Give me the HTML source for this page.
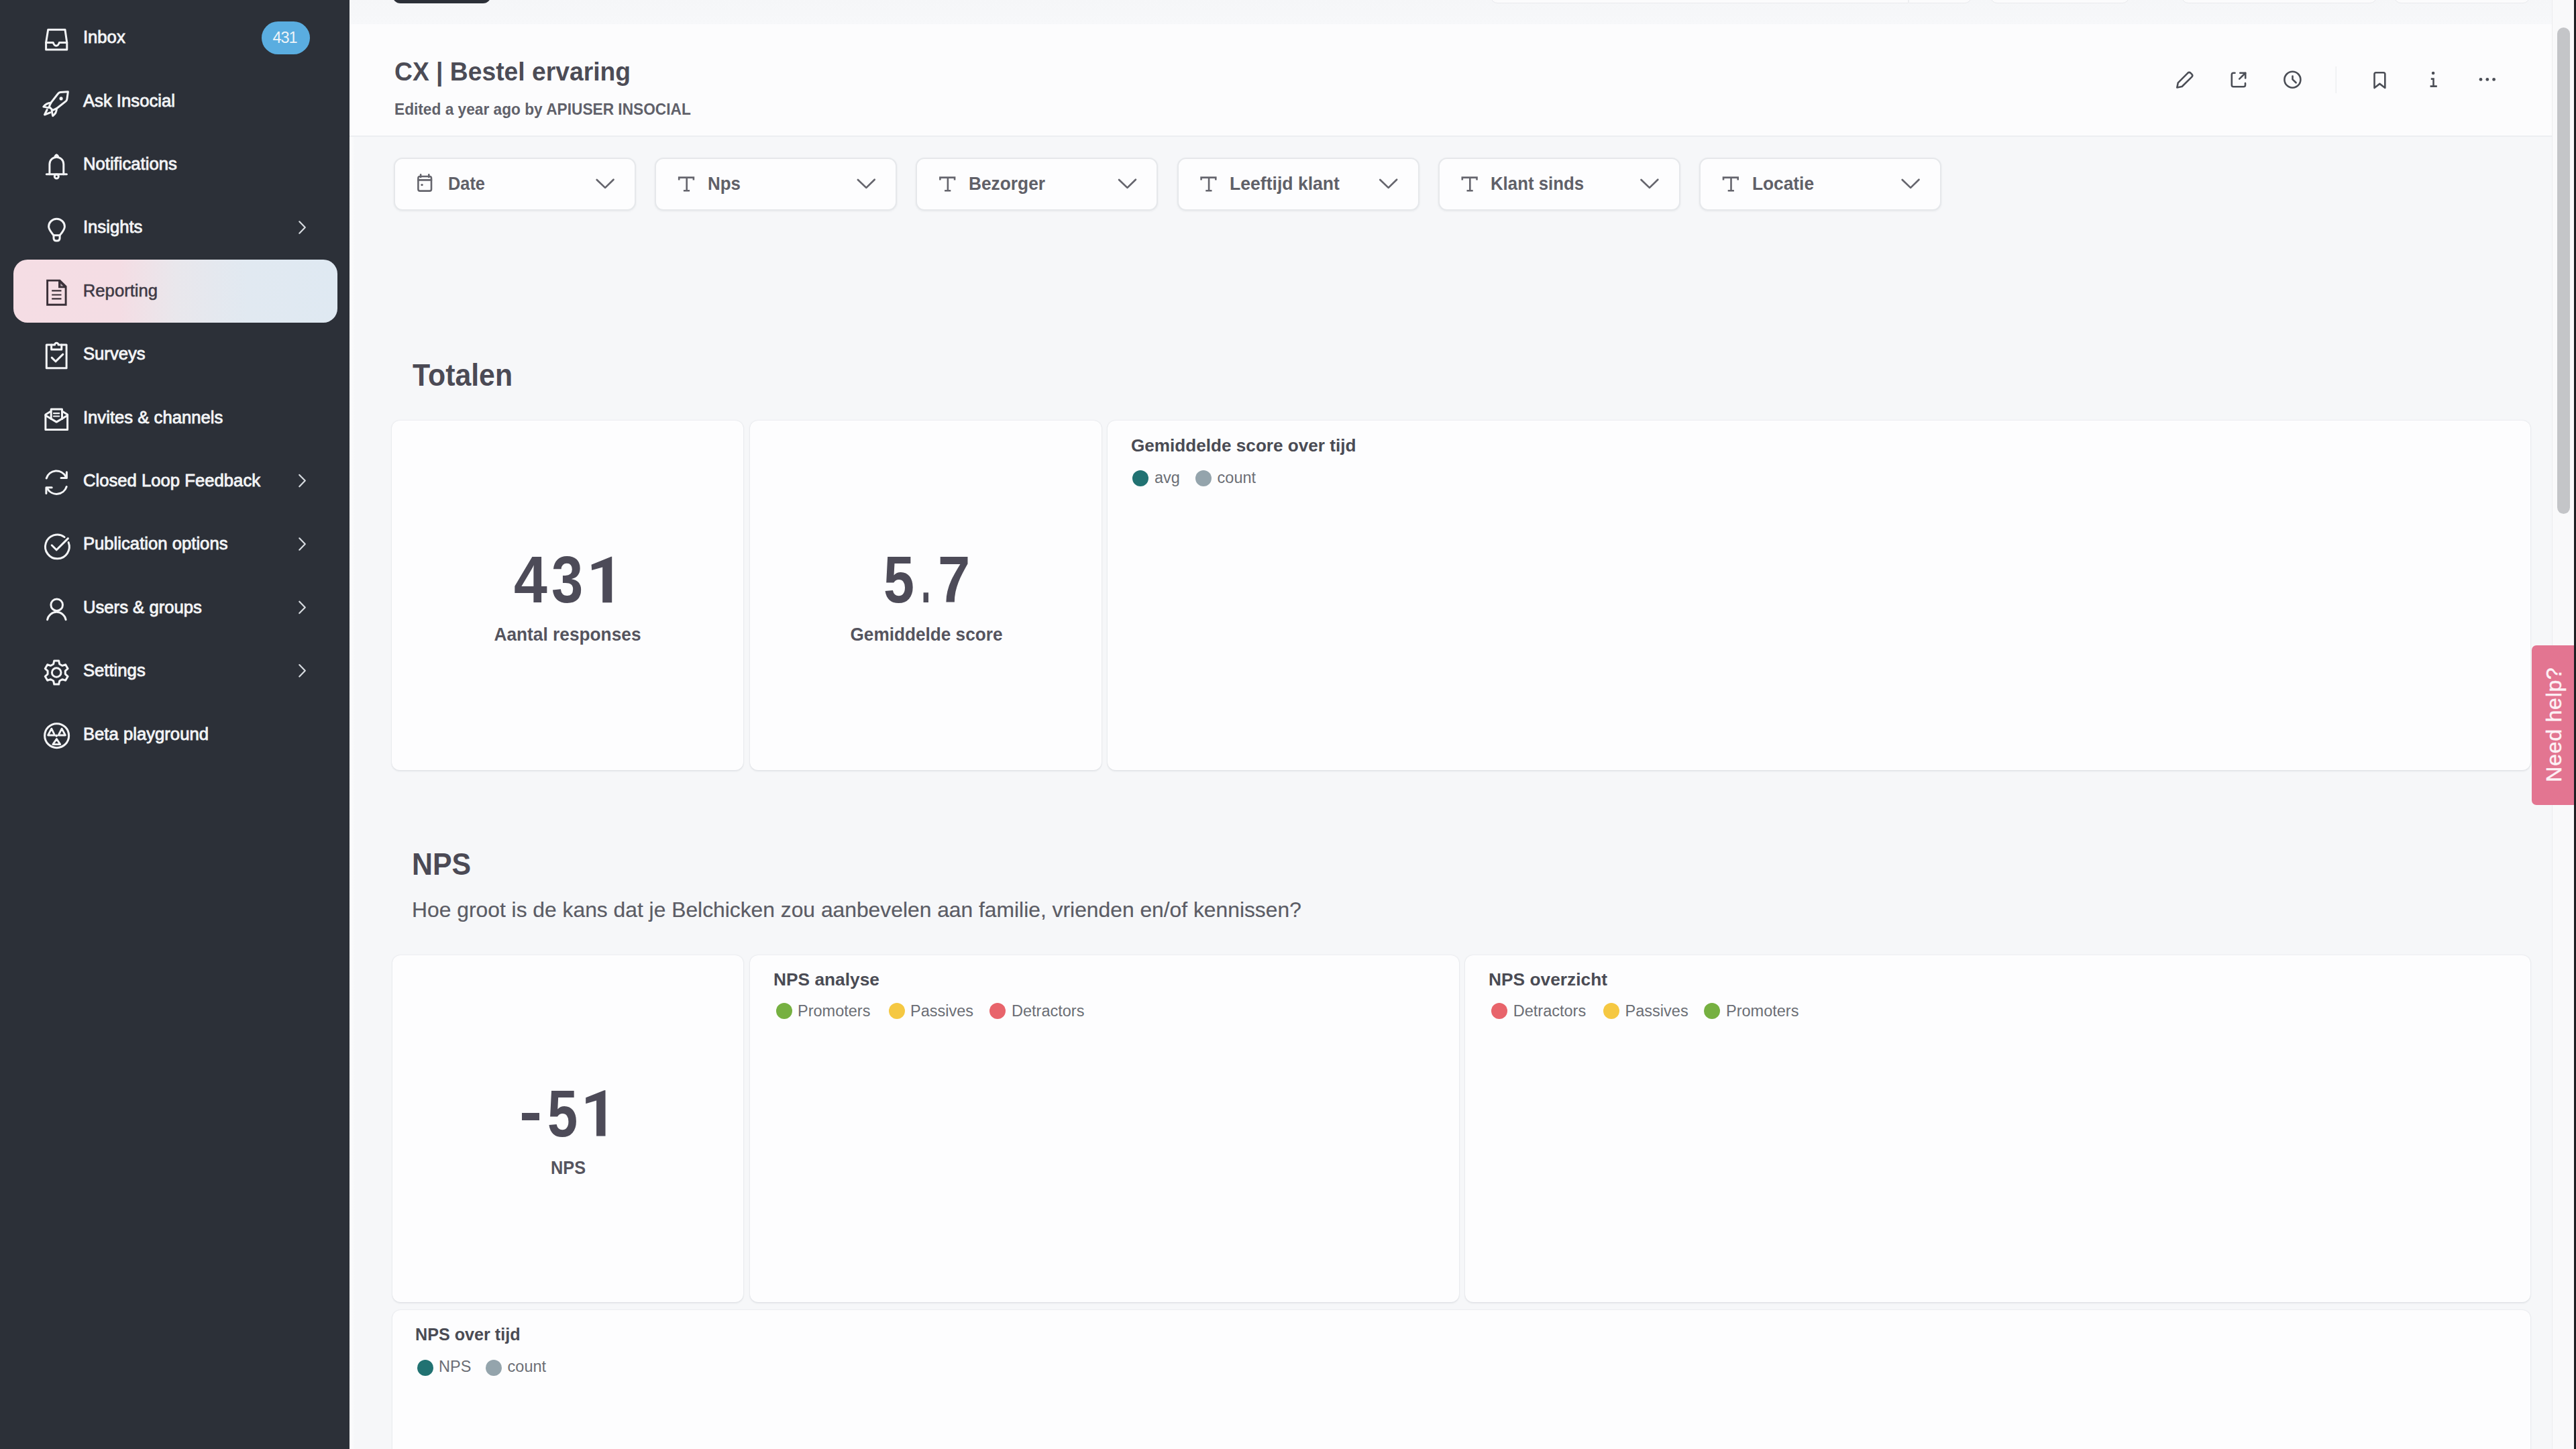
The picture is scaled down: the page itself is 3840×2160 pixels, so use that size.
<!DOCTYPE html>
<html><head><meta charset="utf-8">
<style>
*{box-sizing:border-box;margin:0;padding:0}
html,body{width:3840px;height:2160px;overflow:hidden;font-family:"Liberation Sans",sans-serif;background:#f7f8fa;position:relative}
.t{position:absolute;white-space:nowrap}
.r{position:absolute}
svg{position:absolute;left:0;top:0}
</style></head>
<body>
<div class="r" style="left:0px;top:0px;width:521px;height:2160px;background:#2c3038"></div>
<div class="r" style="left:20px;top:387px;width:483px;height:94px;border-radius:21px;background:linear-gradient(90deg,#f5dde4 0%,#f4dde4 33%,#e9e7ec 50%,#e1e9f1 72%,#dfe9f2 100%)"></div>
<div class="r" style="left:390px;top:32px;width:72px;height:49px;border-radius:25px;background:#5aade0"></div>
<div class="t" style="left:-575.50px;width:2000px;text-align:center;top:44.53px;font-size:23.5px;line-height:23.5px;color:#eef4f8;letter-spacing:-1.000px;">431</div>
<div class="t" style="left:123.92px;top:43.16px;font-size:25.7px;line-height:25.7px;color:#f3f4f6;-webkit-text-stroke:0.85px #f3f4f6;">Inbox</div>
<div class="t" style="left:123.92px;top:137.56px;font-size:25.7px;line-height:25.7px;color:#f3f4f6;-webkit-text-stroke:0.85px #f3f4f6;">Ask Insocial</div>
<div class="t" style="left:123.92px;top:231.96px;font-size:25.7px;line-height:25.7px;color:#f3f4f6;-webkit-text-stroke:0.85px #f3f4f6;">Notifications</div>
<div class="t" style="left:123.92px;top:326.36px;font-size:25.7px;line-height:25.7px;color:#f3f4f6;-webkit-text-stroke:0.85px #f3f4f6;">Insights</div>
<div class="t" style="left:123.78px;top:420.75px;font-size:25.7px;line-height:25.7px;color:#3e3a45;-webkit-text-stroke:0.55px #3e3a45;">Reporting</div>
<div class="t" style="left:123.92px;top:515.15px;font-size:25.7px;line-height:25.7px;color:#f3f4f6;-webkit-text-stroke:0.85px #f3f4f6;">Surveys</div>
<div class="t" style="left:123.92px;top:609.56px;font-size:25.7px;line-height:25.7px;color:#f3f4f6;-webkit-text-stroke:0.85px #f3f4f6;">Invites &amp; channels</div>
<div class="t" style="left:123.92px;top:703.96px;font-size:25.7px;line-height:25.7px;color:#f3f4f6;-webkit-text-stroke:0.85px #f3f4f6;">Closed Loop Feedback</div>
<div class="t" style="left:123.92px;top:798.36px;font-size:25.7px;line-height:25.7px;color:#f3f4f6;-webkit-text-stroke:0.85px #f3f4f6;">Publication options</div>
<div class="t" style="left:123.92px;top:892.75px;font-size:25.7px;line-height:25.7px;color:#f3f4f6;-webkit-text-stroke:0.85px #f3f4f6;">Users &amp; groups</div>
<div class="t" style="left:123.92px;top:987.15px;font-size:25.7px;line-height:25.7px;color:#f3f4f6;-webkit-text-stroke:0.85px #f3f4f6;">Settings</div>
<div class="t" style="left:123.92px;top:1081.56px;font-size:25.7px;line-height:25.7px;color:#f3f4f6;-webkit-text-stroke:0.85px #f3f4f6;">Beta playground</div>
<div class="r" style="left:521px;top:0px;width:3283px;height:2160px;background:#f6f7f9"></div>
<div class="r" style="left:521px;top:37px;width:8px;height:2123px;background:linear-gradient(90deg,#fdfdfd,#f6f7f9)"></div>
<div class="r" style="left:521px;top:0px;width:3283px;height:37px;background:linear-gradient(#f5f6f8,#f7f8fa)"></div>
<div class="r" style="left:2221.7px;top:-30px;width:717.3px;height:35px;background:#fbfbfc;border:1.5px solid #e9eaed;border-radius:10px;box-sizing:border-box"></div>
<div class="r" style="left:2967px;top:-30px;width:207px;height:35px;background:#fbfbfc;border:1.5px solid #e9eaed;border-radius:10px;box-sizing:border-box"></div>
<div class="r" style="left:3252px;top:-30px;width:291px;height:35px;background:#fbfbfc;border:1.5px solid #e9eaed;border-radius:10px;box-sizing:border-box"></div>
<div class="r" style="left:3569px;top:-30px;width:202px;height:35px;background:#fbfbfc;border:1.5px solid #e9eaed;border-radius:10px;box-sizing:border-box"></div>
<div class="r" style="left:2844px;top:-10px;width:1.5px;height:15px;background:#eeeff1"></div>
<div class="r" style="left:585px;top:-30px;width:147px;height:35px;background:#2c3038;border-radius:12px"></div>
<div class="r" style="left:521px;top:36px;width:3283px;height:166px;background:#fcfcfd"></div>
<div class="r" style="left:521px;top:202px;width:3283px;height:2px;background:#eceef1"></div>
<div class="r" style="left:3804px;top:0px;width:33px;height:2160px;background:#f9f9fa;border-left:1px solid #ececee"></div>
<div class="r" style="left:3812px;top:41px;width:19px;height:725px;background:#c4c5c8;border-radius:10px"></div>
<div class="r" style="left:3837px;top:0px;width:3px;height:2160px;background:#1e1f22"></div>
<div class="t" style="left:588.0px;top:87.12px;font-size:39.5px;line-height:39.5px;color:#4c4c56;font-weight:bold;transform:scaleX(0.9430);transform-origin:0 50%;">CX | Bestel ervaring</div>
<div class="t" style="left:588.0px;top:150.96px;font-size:24.4px;line-height:24.4px;color:#60616a;font-weight:bold;transform:scaleX(0.9304);transform-origin:0 50%;">Edited a year ago by APIUSER INSOCIAL</div>
<div class="r" style="left:587.0px;top:235px;width:361px;height:79px;background:#fdfdfe;border:2px solid #e6e8eb;border-radius:13px;box-sizing:border-box;box-shadow:0 1px 3px rgba(40,50,70,0.07)"></div>
<div class="t" style="left:667.7px;top:260.55px;font-size:27px;line-height:27px;color:#606068;font-weight:bold;transform:scaleX(0.9387);transform-origin:0 50%;">Date</div>
<div class="r" style="left:976.2px;top:235px;width:361px;height:79px;background:#fdfdfe;border:2px solid #e6e8eb;border-radius:13px;box-sizing:border-box;box-shadow:0 1px 3px rgba(40,50,70,0.07)"></div>
<div class="t" style="left:1054.7px;top:260.55px;font-size:27px;line-height:27px;color:#606068;font-weight:bold;transform:scaleX(0.9602);transform-origin:0 50%;">Nps</div>
<div class="r" style="left:1365.4px;top:235px;width:361px;height:79px;background:#fdfdfe;border:2px solid #e6e8eb;border-radius:13px;box-sizing:border-box;box-shadow:0 1px 3px rgba(40,50,70,0.07)"></div>
<div class="t" style="left:1443.9px;top:260.55px;font-size:27px;line-height:27px;color:#606068;font-weight:bold;transform:scaleX(0.9740);transform-origin:0 50%;">Bezorger</div>
<div class="r" style="left:1754.6px;top:235px;width:361px;height:79px;background:#fdfdfe;border:2px solid #e6e8eb;border-radius:13px;box-sizing:border-box;box-shadow:0 1px 3px rgba(40,50,70,0.07)"></div>
<div class="t" style="left:1833.1px;top:260.55px;font-size:27px;line-height:27px;color:#606068;font-weight:bold;transform:scaleX(0.9845);transform-origin:0 50%;">Leeftijd klant</div>
<div class="r" style="left:2143.8px;top:235px;width:361px;height:79px;background:#fdfdfe;border:2px solid #e6e8eb;border-radius:13px;box-sizing:border-box;box-shadow:0 1px 3px rgba(40,50,70,0.07)"></div>
<div class="t" style="left:2222.3px;top:260.55px;font-size:27px;line-height:27px;color:#606068;font-weight:bold;transform:scaleX(0.9551);transform-origin:0 50%;">Klant sinds</div>
<div class="r" style="left:2533.0px;top:235px;width:361px;height:79px;background:#fdfdfe;border:2px solid #e6e8eb;border-radius:13px;box-sizing:border-box;box-shadow:0 1px 3px rgba(40,50,70,0.07)"></div>
<div class="t" style="left:2611.5px;top:260.55px;font-size:27px;line-height:27px;color:#606068;font-weight:bold;transform:scaleX(0.9735);transform-origin:0 50%;">Locatie</div>
<div class="t" style="left:615.4px;top:535.05px;font-size:47px;line-height:47px;color:#4b4a55;font-weight:bold;transform:scaleX(0.9110);transform-origin:0 50%;">Totalen</div>
<div class="r" style="left:584px;top:627px;width:524px;height:521px;background:#fdfdfe;border-radius:12px;box-shadow:0 0 2.5px rgba(40,50,70,0.11),0 1.5px 2.5px rgba(40,50,70,0.07)"></div>
<div class="r" style="left:1118px;top:627px;width:524px;height:521px;background:#fdfdfe;border-radius:12px;box-shadow:0 0 2.5px rgba(40,50,70,0.11),0 1.5px 2.5px rgba(40,50,70,0.07)"></div>
<div class="r" style="left:1651px;top:627px;width:2121px;height:521px;background:#fdfdfe;border-radius:12px;box-shadow:0 0 2.5px rgba(40,50,70,0.11),0 1.5px 2.5px rgba(40,50,70,0.07)"></div>
<div class="t" style="left:766.20px;top:814.35px;font-size:99px;line-height:99px;color:#4d4b58;font-weight:bold;transform:scaleX(0.9045);transform-origin:0 50%">4</div>
<div class="t" style="left:822.10px;top:814.35px;font-size:99px;line-height:99px;color:#4d4b58;font-weight:bold;transform:scaleX(0.8572);transform-origin:0 50%">3</div>
<svg width="3840" height="2160" style="position:absolute;left:0;top:0"><path fill="#4d4b58" d="M911.1,829.8 L881.6,841.7 L882.2,850 L898.2,845.4 V898.2 H912.2 V829.8 Z"/></svg>
<div class="t" style="left:-153.80px;width:2000px;text-align:center;top:931.80px;font-size:28px;line-height:28px;color:#55545e;font-weight:bold;transform:scaleX(0.9384);transform-origin:50% 50%;">Aantal responses</div>
<div class="t" style="left:1316.70px;top:814.35px;font-size:99px;line-height:99px;color:#4d4b58;font-weight:bold;transform:scaleX(0.8354);transform-origin:0 50%">5</div>
<div class="t" style="left:1372.80px;top:814.35px;font-size:99px;line-height:99px;color:#4d4b58;font-weight:bold;transform:scaleX(0.5303);transform-origin:0 50%">.</div>
<div class="t" style="left:1397.70px;top:814.35px;font-size:99px;line-height:99px;color:#4d4b58;font-weight:bold;transform:scaleX(0.8772);transform-origin:0 50%">7</div>
<div class="t" style="left:380.50px;width:2000px;text-align:center;top:931.80px;font-size:28px;line-height:28px;color:#55545e;font-weight:bold;transform:scaleX(0.9351);transform-origin:50% 50%;">Gemiddelde score</div>
<div class="t" style="left:1685.5px;top:651.08px;font-size:26.5px;line-height:26.5px;color:#4a4b54;font-weight:bold;transform:scaleX(0.9860);transform-origin:0 50%;">Gemiddelde score over tijd</div>
<div class="r" style="left:1688px;top:701px;width:24px;height:24px;border-radius:50%;background:#217272"></div>
<div class="t" style="left:1721.0px;top:701.02px;font-size:23.5px;line-height:23.5px;color:#6b6e75;">avg</div>
<div class="r" style="left:1782px;top:701px;width:24px;height:24px;border-radius:50%;background:#94a4ac"></div>
<div class="t" style="left:1814.6px;top:701.02px;font-size:23.5px;line-height:23.5px;color:#6b6e75;">count</div>
<div class="t" style="left:614.0px;top:1266.33px;font-size:45.5px;line-height:45.5px;color:#4b4a55;font-weight:bold;transform:scaleX(0.9412);transform-origin:0 50%;">NPS</div>
<div class="t" style="left:614.1px;top:1340.97px;font-size:31.8px;line-height:31.8px;color:#5b5c65;-webkit-text-stroke:0.2px #5b5c65;">Hoe groot is de kans dat je Belchicken zou aanbevelen aan familie, vrienden en/of kennissen?</div>
<div class="r" style="left:585px;top:1424px;width:523px;height:517px;background:#fdfdfe;border-radius:12px;box-shadow:0 0 2.5px rgba(40,50,70,0.11),0 1.5px 2.5px rgba(40,50,70,0.07)"></div>
<div class="r" style="left:1118px;top:1424px;width:1057px;height:517px;background:#fdfdfe;border-radius:12px;box-shadow:0 0 2.5px rgba(40,50,70,0.11),0 1.5px 2.5px rgba(40,50,70,0.07)"></div>
<div class="r" style="left:2184px;top:1424px;width:1588px;height:517px;background:#fdfdfe;border-radius:12px;box-shadow:0 0 2.5px rgba(40,50,70,0.11),0 1.5px 2.5px rgba(40,50,70,0.07)"></div>
<div class="r" style="left:777.6px;top:1659px;width:26.6px;height:10.7px;background:#4d4b58"></div>
<div class="t" style="left:815.90px;top:1609.85px;font-size:99px;line-height:99px;color:#4d4b58;font-weight:bold;transform:scaleX(0.8208);transform-origin:0 50%">5</div>
<svg width="3840" height="2160" style="position:absolute;left:0;top:0"><path fill="#4d4b58" d="M900.8,1625.2 L873.2,1636.2 V1645.2 L889.1,1640.4 V1693.6 H902.5 V1625.2 Z"/></svg>
<div class="t" style="left:-153.20px;width:2000px;text-align:center;top:1727.20px;font-size:28px;line-height:28px;color:#55545e;font-weight:bold;transform:scaleX(0.9037);transform-origin:50% 50%;">NPS</div>
<div class="t" style="left:1152.7px;top:1446.88px;font-size:26.5px;line-height:26.5px;color:#4a4b54;font-weight:bold;transform:scaleX(0.9929);transform-origin:0 50%;">NPS analyse</div>
<div class="r" style="left:1156.5px;top:1495px;width:24px;height:24px;border-radius:50%;background:#76b041"></div>
<div class="t" style="left:1189.0px;top:1495.73px;font-size:23.5px;line-height:23.5px;color:#6b6e75;">Promoters</div>
<div class="r" style="left:1325px;top:1495px;width:24px;height:24px;border-radius:50%;background:#f5c842"></div>
<div class="t" style="left:1357.0px;top:1495.73px;font-size:23.5px;line-height:23.5px;color:#6b6e75;">Passives</div>
<div class="r" style="left:1475px;top:1495px;width:24px;height:24px;border-radius:50%;background:#e8646b"></div>
<div class="t" style="left:1508.0px;top:1495.73px;font-size:23.5px;line-height:23.5px;color:#6b6e75;">Detractors</div>
<div class="t" style="left:2219.2px;top:1446.88px;font-size:26.5px;line-height:26.5px;color:#4a4b54;font-weight:bold;transform:scaleX(0.9932);transform-origin:0 50%;">NPS overzicht</div>
<div class="r" style="left:2222.7px;top:1495px;width:24px;height:24px;border-radius:50%;background:#e8646b"></div>
<div class="t" style="left:2255.8px;top:1495.73px;font-size:23.5px;line-height:23.5px;color:#6b6e75;">Detractors</div>
<div class="r" style="left:2390px;top:1495px;width:24px;height:24px;border-radius:50%;background:#f5c842"></div>
<div class="t" style="left:2422.6px;top:1495.73px;font-size:23.5px;line-height:23.5px;color:#6b6e75;">Passives</div>
<div class="r" style="left:2540px;top:1495px;width:24px;height:24px;border-radius:50%;background:#76b041"></div>
<div class="t" style="left:2573.0px;top:1495.73px;font-size:23.5px;line-height:23.5px;color:#6b6e75;">Promoters</div>
<div class="r" style="left:585px;top:1953px;width:3187px;height:400px;background:#fdfdfe;border-radius:12px;box-shadow:0 0 2.5px rgba(40,50,70,0.11),0 1.5px 2.5px rgba(40,50,70,0.07)"></div>
<div class="t" style="left:618.7px;top:1976.47px;font-size:26.5px;line-height:26.5px;color:#4a4b54;font-weight:bold;transform:scaleX(0.9493);transform-origin:0 50%;">NPS over tijd</div>
<div class="r" style="left:622px;top:2027px;width:24px;height:24px;border-radius:50%;background:#217272"></div>
<div class="t" style="left:654.0px;top:2026.03px;font-size:23.5px;line-height:23.5px;color:#6b6e75;">NPS</div>
<div class="r" style="left:724px;top:2027px;width:24px;height:24px;border-radius:50%;background:#94a4ac"></div>
<div class="t" style="left:756.6px;top:2026.03px;font-size:23.5px;line-height:23.5px;color:#6b6e75;">count</div>
<div class="r" style="left:3774px;top:961.5px;width:63px;height:238px;background:#e37591;border-radius:7px 0 0 7px"></div>
<div class="t" style="left:3607.16px;top:1063.75px;width:400px;height:32px;font-size:32px;line-height:32px;letter-spacing:0.758px;color:#fdf1f5;-webkit-text-stroke:0.5px #fdf1f5;text-align:center;transform:rotate(-90deg);transform-origin:50% 50%;">Need help?</div>
<svg width="3840" height="2160" viewBox="0 0 3840 2160" style="position:absolute;left:0;top:0"><g fill="none" stroke="#f3f4f6" stroke-width="3" stroke-linecap="round" stroke-linejoin="round"><path d="M71.7,44.2 H97 L99.8,63.6 V73.9 H68.6 V63.6 Z"/><path d="M68.6,63.6 H79.3 Q80.8,68.2 83.8,68.2 Q86.8,68.2 88.3,63.6 H99.8"/><path d="M101.4,136.8 L90,137.6 Q88,137.9 86.6,139.5 L75.9,153.2 L73.2,159.1 L78.5,164.4 L84.4,161.7 L98.2,150.9 Q99.7,149.6 99.9,147.6 Z"/><path d="M75.9,153.2 Q69,153.5 64.8,159.1 L72.4,160.6"/><path d="M84.4,161.7 Q84.5,168.5 78.7,172.7 L77.1,165.2"/><path d="M70.2,163.5 L66.5,171 L74.6,167.9"/><circle cx="91.1" cy="146.9" r="1.8" fill="#f3f4f6" stroke-width="1.5"/><path d="M73.9,259.8 V244.7 A10.45,10.45 0 0 1 94.8,244.7 V259.8"/><path d="M69.3,259.8 H99.4"/><circle cx="84.3" cy="263" r="3"/><path d="M81.2,233.2 Q84.3,227 87.4,233.2 Z" fill="#f3f4f6" stroke-width="1.6"/><path d="M80,350.8 C76.5,346.5 72.6,342.5 72.6,337.8 A11.9,11.6 0 0 1 96.4,337.8 C96.4,342.5 92.6,346.5 89.1,350.8 Z"/><path d="M80,350.8 V355 Q80,359 84.5,359 Q89.1,359 89.1,355 V350.8"/><path d="M76.6,513.9 H69.3 V548.7 H99.1 V513.9 H91.8"/><path d="M76.6,513.9 V520.9 H91.8 V513.9 H87 A2.7,2.7 0 0 0 81.6,513.9 Z"/><path d="M77.2,533.1 L82.9,538.8 L93.8,528.2"/><path d="M75.6,613.2 L67.9,618 V640.4 H100.6 V618 L93.1,613.2"/><path d="M76.2,624.5 V609.9 H92.5 V624.5"/><path d="M67.9,619.2 L84.2,629.1 L100.6,619.2"/><path d="M80,616.2 H88.2 M80,620.5 H88.2" stroke-width="2.2"/><path d="M69.2,713 A15.6,15.6 0 0 1 98,710.5"/><path d="M91,712.5 H99.4 V703.8"/><path d="M99.2,725.5 A15.6,15.6 0 0 1 70.6,728.2"/><path d="M77.2,726.8 H68.9 V735.5"/><path d="M96.1,800.6 A17.9,17.9 0 1 0 102.1,808.5"/><path d="M77.2,812.8 L84.2,819.8 L101.4,802.6"/><circle cx="84.7" cy="901.7" r="8.8"/><path d="M70.6,923.7 A14,14 0 0 1 98.1,923.7"/><path d="M79.65,990.00 L80.78,984.93 L87.62,984.93 L88.75,990.00 L92.75,992.31 L97.71,990.76 L101.12,996.67 L97.30,1000.19 L97.30,1004.81 L101.12,1008.33 L97.71,1014.24 L92.75,1012.69 L88.75,1015.00 L87.62,1020.07 L80.78,1020.07 L79.65,1015.00 L75.65,1012.69 L70.69,1014.24 L67.28,1008.33 L71.10,1004.81 L71.10,1000.19 L67.28,996.67 L70.69,990.76 L75.65,992.31 Z"/><circle cx="84.2" cy="1002.5" r="6.8"/><circle cx="84.65" cy="1096.65" r="18"/><path d="M76.8,1086.2 L71.6,1096 H81.6 Z M92.1,1086.2 L87.1,1096 H97.4 Z M84.4,1101.6 L78.8,1109.6 H89.8 Z" stroke-width="2.8"/><circle cx="84.2" cy="1096.7" r="1.6" fill="#f3f4f6" stroke-width="1"/><path d="M446.3,330.3 L454.8,339.0 L446.3,347.7" stroke="#d7dbe0" stroke-width="2.2"/><path d="M446.3,707.9 L454.8,716.6 L446.3,725.3" stroke="#d7dbe0" stroke-width="2.2"/><path d="M446.3,802.3 L454.8,811.0 L446.3,819.7" stroke="#d7dbe0" stroke-width="2.2"/><path d="M446.3,896.7 L454.8,905.4 L446.3,914.1" stroke="#d7dbe0" stroke-width="2.2"/><path d="M446.3,991.1 L454.8,999.8 L446.3,1008.5" stroke="#d7dbe0" stroke-width="2.2"/></g><g fill="none" stroke="#3a3038" stroke-width="2.9" stroke-linejoin="miter"><path d="M70.6,418.1 H89.1 L98.1,427.2 V454.2 H70.6 Z"/><path d="M88.5,418.5 V427.8 H97.8" /><path d="M89.8,421 L95.8,427 H89.8 Z" fill="#b9aab3" stroke-width="1.2"/><path d="M77.2,433.4 H91.5 M77.2,439.5 H91.5 M77.2,445.4 H91.5" stroke-width="2.1"/></g><g fill="none" stroke="#4b4e56" stroke-width="2.6" stroke-linecap="round" stroke-linejoin="round"><path d="M3245.3,130.5 L3246.8,123.3 L3261.3,108.8 Q3263.4,106.9 3265.5,108.8 L3267.3,110.6 Q3269.2,112.6 3267.3,114.6 L3252.7,129 Z"/><path d="M3331.5,108.7 H3329.3 Q3326.8,108.7 3326.8,111.2 V126.7 Q3326.8,129.2 3329.3,129.2 H3344.5 Q3347,129.2 3347,126.7 V124"/><path d="M3338.2,117.6 L3347.2,108.8"/><path d="M3339.3,108.8 H3347.2 V116.5"/><circle cx="3417.4" cy="118.7" r="12"/><path d="M3417.5,113.5 V118.4 L3422.6,123.3"/><path d="M3539.5,131 V110.5 Q3539.5,108.2 3541.8,108.2 H3553 Q3555.3,108.2 3555.3,110.5 V131 L3547.4,124.9 Z"/><path d="M3623.8,117.6 H3627.5 V128.6 M3622.6,128.6 H3632.8" stroke-linecap="butt" stroke-linejoin="miter"/></g><g fill="#4b4e56"><circle cx="3627.1" cy="109" r="2.3"/><circle cx="3698" cy="118.4" r="2.4"/><circle cx="3707.8" cy="118.4" r="2.4"/><circle cx="3717.6" cy="118.4" r="2.4"/></g><rect x="3481.5" y="99" width="1.5" height="40" fill="#eeeff1"/><g fill="none" stroke="#65656d" stroke-width="2.6" stroke-linecap="round" stroke-linejoin="round"><rect x="623.4" y="263" width="19.6" height="21.6" rx="2.6"/><path d="M623.4,268.4 H643 M627.1,260.3 V264 M639.3,260.3 V264"/><path d="M889.7,268 L902.1,279.9 L914.5,267.7" stroke-width="2.7"/><path d="M1012.2,268.4 V264.6 H1033.9 V268.4 M1023.7,264.6 V284.3 M1018.9,284.3 H1028.1" stroke-linecap="butt" stroke-linejoin="miter"/><path d="M1278.9,268 L1291.3,279.9 L1303.7,267.7" stroke-width="2.7"/><path d="M1401.4,268.4 V264.6 H1423.1 V268.4 M1412.9,264.6 V284.3 M1408.1,284.3 H1417.3" stroke-linecap="butt" stroke-linejoin="miter"/><path d="M1668.1,268 L1680.5,279.9 L1692.9,267.7" stroke-width="2.7"/><path d="M1790.6,268.4 V264.6 H1812.3 V268.4 M1802.1,264.6 V284.3 M1797.3,284.3 H1806.5" stroke-linecap="butt" stroke-linejoin="miter"/><path d="M2057.3,268 L2069.7,279.9 L2082.1,267.7" stroke-width="2.7"/><path d="M2179.8,268.4 V264.6 H2201.5 V268.4 M2191.3,264.6 V284.3 M2186.5,284.3 H2195.7" stroke-linecap="butt" stroke-linejoin="miter"/><path d="M2446.5,268 L2458.9,279.9 L2471.3,267.7" stroke-width="2.7"/><path d="M2569.0,268.4 V264.6 H2590.7 V268.4 M2580.5,264.6 V284.3 M2575.7,284.3 H2584.9" stroke-linecap="butt" stroke-linejoin="miter"/><path d="M2835.7,268 L2848.1,279.9 L2860.5,267.7" stroke-width="2.7"/></g><circle cx="629" cy="275.6" r="1.7" fill="#65656d"/></svg>
</body></html>
